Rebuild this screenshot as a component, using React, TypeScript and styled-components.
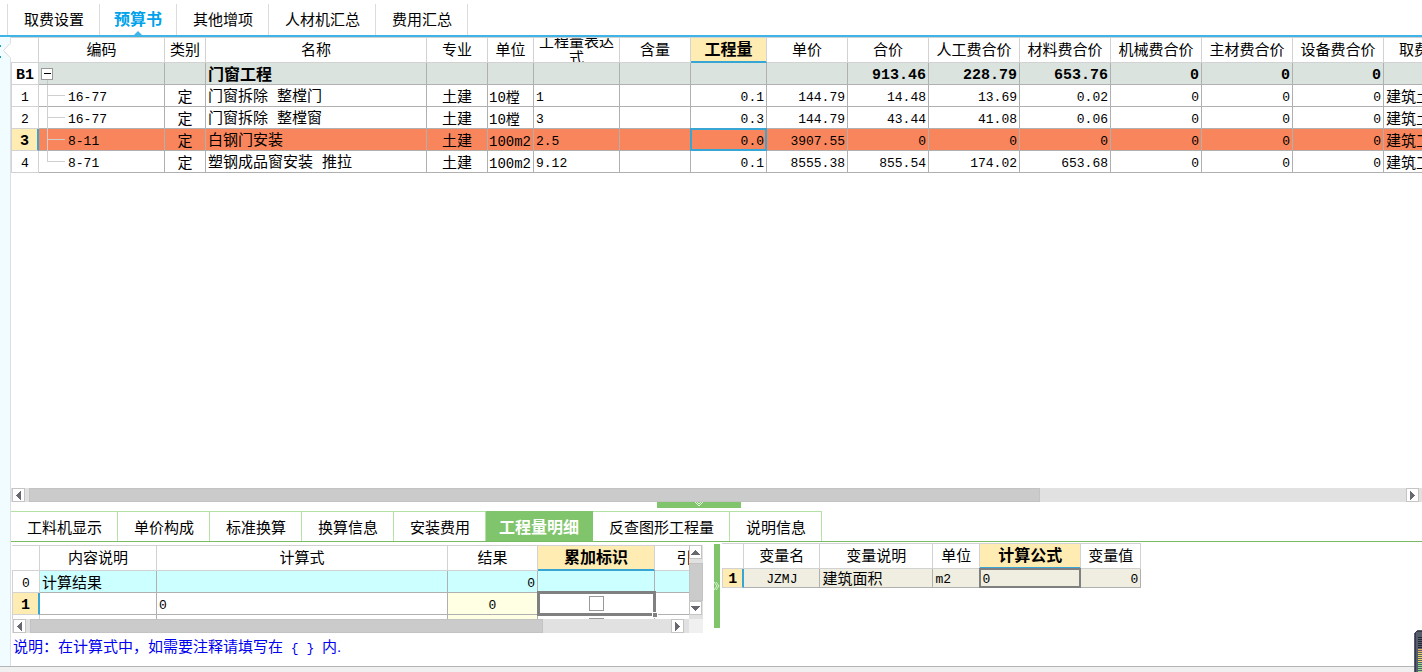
import React from 'react';
import styled, { createGlobalStyle, css } from 'styled-components';

const sans = `"Liberation Sans", "Noto Sans CJK SC", sans-serif`;
const mono = `"Liberation Mono", "Noto Sans CJK SC", monospace`;

const color = {
  line: '#b0b0b0',
  softLine: '#d2d2d2',
  blue: '#3fb4e6',
  cellBlue: '#38a6d4',
  green: '#80c46b',
  paleGreen: '#b4e2a4',
  active: '#ffecb3',
};

const GlobalStyle = createGlobalStyle`
  *, *::before, *::after { box-sizing: border-box; }
  body { margin: 0; background: #fff; color: #000; font: 15px/20px ${sans}; }
  button { font: inherit; color: inherit; }
`;

const Page = styled.div`
  position: relative;
  display: flex;
  flex-direction: column;
  min-height: 100vh;
  overflow: hidden;
`;

/* Top tabs */

const TopTabs = styled.nav`
  display: flex;
  align-items: flex-end;
  height: 37px;
  padding-left: 7px;
  border-bottom: 2px solid ${color.blue};
`;

const TopTab = styled.button<{ $active?: boolean }>`
  position: relative;
  height: 31px;
  padding: 0 ${p => (p.$active ? 14 : 15)}px 0 ${p => (p.$active ? 14 : 16)}px;
  border: 0;
  border-right: 1px solid #dcdcdc;
  background: none;
  white-space: nowrap;
  ${p =>
    p.$active &&
    css`
      color: #00a2ea;
      font-size: 16px;
      font-weight: 700;
      &::after {
        content: '';
        position: absolute;
        bottom: 0;
        left: calc(50% - 4px);
        border: 4px solid transparent;
        border-top: 0;
        border-bottom-color: ${color.blue};
      }
    `}
  &:first-child { border-left: 1px solid #dcdcdc; }
`;

/* Frame */

const Frame = styled.div`
  display: flex;
  flex: 1;
  min-width: 0;
`;

const SideStrip = styled.aside`
  flex: none;
  width: 11px;
  border-right: 1px solid #dedede;
  background: #f0fcff;
  svg { display: block; }
`;

const Main = styled.main`
  display: flex;
  flex: 1;
  flex-direction: column;
  min-width: 0;
`;

const GridView = styled.div`
  flex: 1;
  min-height: 0;
  overflow: hidden;
`;

/* Data grids */

const Grid = styled.table<{ $rowHeight: number; $width: number }>`
  table-layout: fixed;
  width: ${p => p.$width}px;
  border-spacing: 0;
  td, tbody th { height: ${p => p.$rowHeight}px; }
`;

const HeadCell = styled.th<{ $active?: boolean }>`
  height: 26px;
  padding: 0;
  border: solid ${color.softLine};
  border-width: 1px 1px 1px 0;
  font-weight: 400;
  white-space: nowrap;
  ${p =>
    p.$active &&
    css`
      padding-top: 1px;
      background: ${color.active};
      border-bottom: 2px solid ${color.cellBlue};
      font-size: 16px;
      font-weight: 700;
    `}
`;

const HeadLabel = styled.div<{ $wrap?: boolean }>`
  display: flex;
  align-items: center;
  justify-content: center;
  height: ${p => (p.$wrap ? 24 : 22)}px;
  overflow: hidden;
  line-height: 16px;
  white-space: ${p => (p.$wrap ? 'normal' : 'nowrap')};
`;

const IndexCell = styled.th<{ $active?: boolean; $bold?: boolean; $slim?: boolean }>`
  padding: ${p => (p.$slim ? 3 : 5)}px 0 0;
  border: solid ${color.softLine};
  border-width: 0 1px 1px;
  font: ${p => (p.$active || p.$bold ? '700 15px' : '400 13px')}/${p => (p.$slim ? 15 : 16)}px ${mono};
  text-align: center;
  ${p =>
    p.$active &&
    css`
      background: ${color.active};
      border-right: 2px solid ${color.cellBlue};
    `}
`;

type CellProps = {
  $align?: 'left' | 'center' | 'right';
  $bg?: string;
  $frame?: string;
  $frameWidth?: number;
  $num?: boolean;
  $bold?: boolean;
};

const Cell = styled.td<CellProps>`
  position: relative;
  padding: 2px 2px 0;
  border: solid ${color.line};
  border-width: 0 1px 1px 0;
  background: ${p => p.$bg ?? 'transparent'};
  text-align: ${p => p.$align ?? 'left'};
  line-height: 19px;
  white-space: nowrap;
  ${p =>
    p.$num &&
    css`
      padding-top: 5px;
      font-family: ${mono};
      font-size: ${p.$bold ? 15 : 13}px;
      line-height: 16px;
    `}
  ${p => p.$bold && css`font-weight: 700;`}
  ${p =>
    p.$frame &&
    css`
      z-index: 1;
      &::after {
        content: '';
        position: absolute;
        inset: ${p.$frameWidth === 3 ? '-2px -2px -2px -1px' : '-1px'};
        border: ${p.$frameWidth ?? 2}px solid ${p.$frame};
        pointer-events: none;
      }
    `}
`;

const NameCell = styled(Cell)`
  padding-top: 5px;
  font-family: ${mono};
  font-size: ${p => (p.$bold ? 16 : 15)}px;
  line-height: 16px;
`;

const UnitCell = styled(Cell)`
  padding: 5px 0 0 1px;
  font-family: ${mono};
  font-size: 14px;
  line-height: 16px;
`;

const CodeCell = styled(Cell)`
  padding: 0;
`;

const SlimCell = styled(Cell)`
  padding-top: ${p => (p.$num ? 3 : 2)}px;
  line-height: ${p => (p.$num ? 15 : 16)}px;
`;

const CheckCell = styled(Cell)`
  padding: 0;
`;

const CodeLine = styled.div`
  display: flex;
  gap: 2px;
  height: 21px;
  font: 13px/26px ${mono};
  svg { display: block; flex: none; }
`;

const TreeToggle = styled.button`
  display: block;
  height: 21px;
  padding: 0;
  border: 0;
  background: none;
`;

/* Scroll bars */

const HBar = styled.div`
  display: flex;
  flex: none;
  align-items: stretch;
  height: 14px;
  padding: 0 3px 0 1px;
  background: #e1e1e1;
`;

const BarButton = styled.button`
  display: flex;
  flex: none;
  align-items: center;
  justify-content: center;
  width: 13px;
  height: 14px;
  padding: 0;
  border: 1px solid #c4c4c4;
  background: #fff;
`;

const HTrack = styled.div`
  flex: 1;
  margin-left: 4px;
`;

const HThumb = styled.div<{ $share: number }>`
  width: ${p => p.$share}%;
  height: 14px;
  border: 1px solid #c3c3c3;
  background: #cbcbcb;
`;

const VBar = styled.div`
  display: flex;
  flex: none;
  flex-direction: column;
  width: 14px;
  padding-bottom: 4px;
  background: #e1e1e1;
`;

const VThumb = styled.div`
  flex: 1;
  margin-top: 4px;
  border: 1px solid #c3c3c3;
  background: #cbcbcb;
`;

/* Lower pane */

const HandleRow = styled.div`
  display: flex;
  justify-content: center;
  height: 9px;
  padding-right: 35px;
`;

const PaneHandle = styled.button`
  display: flex;
  justify-content: center;
  width: 84px;
  height: 6px;
  padding: 0;
  border: 0;
  background: ${color.green};
`;

const PaneTabs = styled.nav`
  display: flex;
  height: 31px;
  border-bottom: 1px solid #78bb64;
`;

const PaneTab = styled.button<{ $active?: boolean }>`
  height: 30px;
  padding: 2px ${p => (p.$active ? 13 : 15)}px 0 ${p => (p.$active ? 13 : 16)}px;
  border: solid ${color.paleGreen};
  border-width: 1px 1px 0 0;
  background: none;
  white-space: nowrap;
  ${p =>
    p.$active &&
    css`
      border-color: ${color.green};
      background: ${color.green};
      color: #fff;
      font-size: 16px;
      font-weight: 700;
    `}
`;

const Panels = styled.div`
  display: flex;
  height: 91px;
`;

const DetailPanel = styled.section`
  flex: none;
  width: calc(49% + 1px);
  padding: 3px 0 0 1px;
`;

const DetailBody = styled.div`
  display: flex;
  height: 74px;
`;

const DetailFoot = styled.div`
  display: flex;
  background: #f0f0f0;
  ${HBar} { flex: 1; padding-right: 5px; }
`;

const Corner = styled.div`
  width: 14px;
`;

const Splitter = styled.button`
  display: flex;
  flex: none;
  align-items: center;
  width: 6px;
  height: 84px;
  margin: 2px 2px 0 11px;
  padding: 0;
  border: 0;
  background: ${color.green};
`;

const VariablePanel = styled.section`
  flex: 1;
  min-width: 0;
  padding-top: 1px;
  overflow: hidden;
`;

const Check = styled.input`
  appearance: none;
  display: block;
  width: 15px;
  height: 15px;
  margin: 0 auto;
  border: 1px solid #999;
  background: #fff;
`;

const FillHandle = styled.i`
  position: absolute;
  right: -4px;
  bottom: -4px;
  z-index: 2;
  width: 6px;
  height: 6px;
  border: 1px solid #fff;
  background: #808080;
`;

const Note = styled.p`
  height: 33px;
  margin: 0;
  padding: 4px 2px;
  color: #0000f0;
`;

const Braces = styled.code`
  font: 13px/20px ${mono};
  white-space: pre;
`;

const StatusBar = styled.footer`
  height: 6px;
  border-top: 1px solid #b4b4b4;
  background: #f0f0f0;
`;

const Meter = styled.svg`
  position: absolute;
  right: 0;
  bottom: 0;
`;

const paths = {
  left: 'M7 0v9L2 4.5z',
  right: 'M2 0v9l5-4.5z',
  up: 'M0 7h9L4.5 2z',
  down: 'M0 2h9L4.5 7z',
};

function Arrow({ dir, label }: { dir: keyof typeof paths; label: string }) {
  return (
    <BarButton aria-label={label}>
      <svg width="9" height="9" shapeRendering="crispEdges">
        <path d={paths[dir]} fill="#686870" />
      </svg>
    </BarButton>
  );
}

function ScrollX({ share }: { share: number }) {
  return (
    <HBar>
      <Arrow dir="left" label="向左滚动" />
      <HTrack>
        <HThumb $share={share} />
      </HTrack>
      <Arrow dir="right" label="向右滚动" />
    </HBar>
  );
}

function Branch({ last }: { last?: boolean }) {
  return (
    <svg width="27" height="22" shapeRendering="crispEdges">
      <path d={last ? 'M8.5 0V10.5H26' : 'M8.5 0V22M8.5 10.5H26'} fill="none" stroke="#cfcfcf" />
    </svg>
  );
}

const columns: [string, number][] = [
  ['编码', 126], ['类别', 41], ['名称', 221], ['专业', 61], ['单位', 46],
  ['工程量表达式', 86], ['含量', 71], ['工程量', 76], ['单价', 81], ['合价', 81],
  ['人工费合价', 91], ['材料费合价', 91], ['机械费合价', 91], ['主材费合价', 91],
  ['设备费合价', 91], ['取费专业', 91],
];
const budgetWidth = columns.reduce((sum, c) => sum + c[1], 28);

const rows = [
  { code: '16-77', name: '门窗拆除 整樘门', unit: '10樘', expr: '1', qty: '0.1', money: ['144.79', '14.48', '13.69', '0.02', '0', '0', '0'], fee: '建筑土建' },
  { code: '16-77', name: '门窗拆除 整樘窗', unit: '10樘', expr: '3', qty: '0.3', money: ['144.79', '43.44', '41.08', '0.06', '0', '0', '0'], fee: '建筑土建' },
  { code: '8-11', name: '白钢门安装', unit: '100m2', expr: '2.5', qty: '0.0', money: ['3907.55', '0', '0', '0', '0', '0', '0'], fee: '建筑工程', active: true },
  { code: '8-71', name: '塑钢成品窗安装 推拉', unit: '100m2', expr: '9.12', qty: '0.1', money: ['8555.38', '855.54', '174.02', '653.68', '0', '0', '0'], fee: '建筑工程' },
];

function BudgetGrid() {
  const group = '#dae3de';
  return (
    <Grid $rowHeight={22} $width={budgetWidth}>
      <colgroup>
        <col width={28} />
        {columns.map(([label, w]) => <col key={label} width={w} />)}
      </colgroup>
      <thead>
        <tr>
          <HeadCell />
          {columns.map(([label]) => (
            <HeadCell key={label} $active={label === '工程量'}>
              <HeadLabel $wrap={label === '工程量表达式'}>{label}</HeadLabel>
            </HeadCell>
          ))}
        </tr>
      </thead>
      <tbody>
        <tr>
          <IndexCell $bold>B1</IndexCell>
          <CodeCell $bg={group}>
            <TreeToggle aria-label="折叠">
              <svg width="16" height="21" shapeRendering="crispEdges" display="block">
                <path d="M2.5 5.5h11v11h-11z" fill="#fff" stroke="#999" />
                <path d="M5 10.5h7" stroke="#000" />
                <path d="M8.5 17v4" stroke="#c4c8c6" />
              </svg>
            </TreeToggle>
          </CodeCell>
          <Cell $bg={group} />
          <NameCell $bg={group} $bold>门窗工程</NameCell>
          {['', '', '', '', '', '', '913.46', '228.79', '653.76', '0', '0', '0', ''].map((v, i) => (
            <Cell key={i} $bg={group} $align="right" $num $bold>{v}</Cell>
          ))}
        </tr>
        {rows.map((r, i) => {
          const bg = r.active ? '#f9855c' : undefined;
          return (
            <tr key={i}>
              <IndexCell $active={r.active}>{i + 1}</IndexCell>
              <CodeCell $bg={bg}>
                <CodeLine><Branch last={i === rows.length - 1} />{r.code}</CodeLine>
              </CodeCell>
              <Cell $bg={bg} $align="center">定</Cell>
              <NameCell $bg={bg}>{r.name}</NameCell>
              <Cell $bg={bg} $align="center">土建</Cell>
              <UnitCell $bg={bg}>{r.unit}</UnitCell>
              <Cell $bg={bg} $num>{r.expr}</Cell>
              <Cell $bg={bg} />
              <Cell $bg={bg} $align="right" $num $frame={r.active ? color.cellBlue : undefined}>{r.qty}</Cell>
              {r.money.map((v, j) => <Cell key={j} $bg={bg} $align="right" $num>{v}</Cell>)}
              <Cell $bg={bg}>{r.fee}</Cell>
            </tr>
          );
        })}
      </tbody>
    </Grid>
  );
}

const detailWidths = [28, 117, 291, 90, 117, 74];

function DetailGrid() {
  const cyan = '#ccffff';
  const yellow = '#ffffe3';
  return (
    <Grid $rowHeight={22} $width={717}>
      <colgroup>{detailWidths.map((w, i) => <col key={i} width={w} />)}</colgroup>
      <thead>
        <tr>
          <HeadCell />
          {['内容说明', '计算式', '结果', '累加标识', '引用'].map(label => (
            <HeadCell key={label} $active={label === '累加标识'}><HeadLabel>{label}</HeadLabel></HeadCell>
          ))}
        </tr>
      </thead>
      <tbody>
        <tr>
          <IndexCell>0</IndexCell>
          <Cell $bg={cyan}>计算结果</Cell>
          <Cell $bg={cyan} />
          <Cell $bg={cyan} $align="right" $num>0</Cell>
          <Cell $bg={cyan} />
          <Cell $bg={cyan} />
        </tr>
        <tr>
          <IndexCell $active>1</IndexCell>
          <Cell />
          <Cell $num>0</Cell>
          <Cell $bg={yellow} $align="center" $num>0</Cell>
          <CheckCell $frame="#808080" $frameWidth={3}>
            <Check type="checkbox" aria-label="累加标识 1" />
            <FillHandle />
          </CheckCell>
          <Cell />
        </tr>
        <tr>
          <IndexCell />
          <Cell />
          <Cell />
          <Cell $bg={yellow} />
          <CheckCell><Check type="checkbox" aria-label="累加标识 2" /></CheckCell>
          <Cell />
        </tr>
      </tbody>
    </Grid>
  );
}

const variableWidths = [22, 76, 113, 47, 101, 60];

function VariableGrid() {
  const cream = '#efeee0';
  return (
    <Grid $rowHeight={19} $width={419}>
      <colgroup>{variableWidths.map((w, i) => <col key={i} width={w} />)}</colgroup>
      <thead>
        <tr>
          <HeadCell />
          {['变量名', '变量说明', '单位', '计算公式', '变量值'].map(label => (
            <HeadCell key={label} $active={label === '计算公式'}><HeadLabel>{label}</HeadLabel></HeadCell>
          ))}
        </tr>
      </thead>
      <tbody>
        <tr>
          <IndexCell $slim $active>1</IndexCell>
          <SlimCell $bg={cream} $align="center" $num>JZMJ</SlimCell>
          <SlimCell $bg={cream}>建筑面积</SlimCell>
          <SlimCell $bg={cream} $num>m2</SlimCell>
          <SlimCell $bg={cream} $num $frame="#808080">0</SlimCell>
          <SlimCell $bg={cream} $align="right" $num>0</SlimCell>
        </tr>
      </tbody>
    </Grid>
  );
}

export default function App() {
  return (
    <Page>
      <GlobalStyle />
      <TopTabs>
        {['取费设置', '预算书', '其他增项', '人材机汇总', '费用汇总'].map(t => (
          <TopTab key={t} $active={t === '预算书'}>{t}</TopTab>
        ))}
      </TopTabs>
      <Frame>
        <SideStrip>
          <svg width="11" height="24">
            <path d="M0 8h1v2H0zM0 19h1v2H0z" fill="#1aa0bd" />
            <path d="M11 6L3.500 13.500L11 21z" fill="#fff" />
            <path d="M10 6.500L3.500 13.500L10 20.500" fill="none" stroke="#dadada" />
          </svg>
        </SideStrip>
        <Main>
          <GridView><BudgetGrid /></GridView>
          <ScrollX share={73.4} />
          <HandleRow>
            <PaneHandle aria-label="折叠下方面板">
              <svg width="10" height="6">
                <path d="M1 0l4 4L9 0M3 0l2 2L7 0" fill="none" stroke="#e4f8de" />
              </svg>
            </PaneHandle>
          </HandleRow>
          <PaneTabs>
            {['工料机显示', '单价构成', '标准换算', '换算信息', '安装费用', '工程量明细', '反查图形工程量', '说明信息'].map(t => (
              <PaneTab key={t} $active={t === '工程量明细'}>{t}</PaneTab>
            ))}
          </PaneTabs>
          <Panels>
            <DetailPanel>
              <DetailBody>
                <GridView><DetailGrid /></GridView>
                <VBar>
                  <Arrow dir="up" label="向上滚动" />
                  <VThumb />
                  <Arrow dir="down" label="向下滚动" />
                </VBar>
              </DetailBody>
              <DetailFoot>
                <ScrollX share={80} />
                <Corner />
              </DetailFoot>
            </DetailPanel>
            <Splitter aria-label="折叠右侧面板">
              <svg width="6" height="10">
                <path d="M0 1l3 4-3 4M2 1l3 4-3 4" fill="none" stroke="#dcf4d4" />
              </svg>
            </Splitter>
            <VariablePanel><VariableGrid /></VariablePanel>
          </Panels>
          <Note>说明：在计算式中，如需要注释请填写在<Braces>{' { } '}</Braces>内.</Note>
        </Main>
      </Frame>
      <StatusBar />
      <Meter width="8" height="42" shapeRendering="crispEdges">
        <path d="M8 0H3L0 3V42H8z" fill="#565d6c" />
        <path d="M1 42V3L3 1H8" fill="none" stroke="#363b45" />
        {Array.from({ length: 18 }, (_, i) => (
          <path
            key={i}
            d={`M4 ${7.5 + i * 2}h4`}
            stroke={i < 6 ? '#252933' : i < 8 ? '#efb460' : i < 13 ? '#e6da5e' : '#8ee08a'}
          />
        ))}
      </Meter>
    </Page>
  );
}
